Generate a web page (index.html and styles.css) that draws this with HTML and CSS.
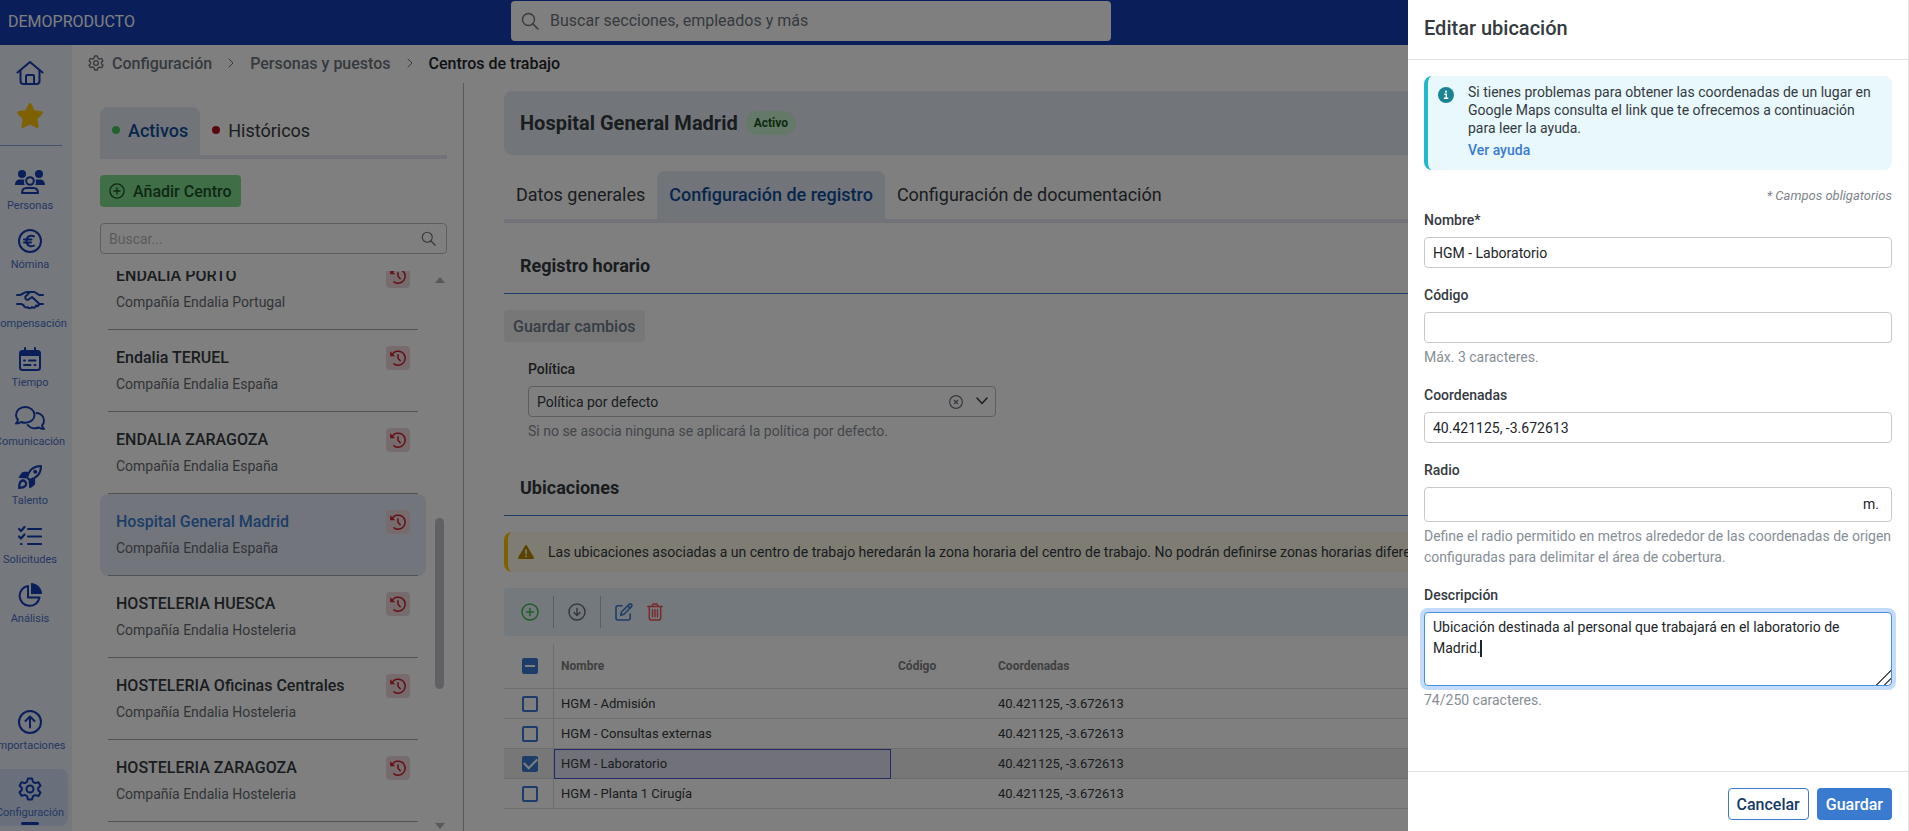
FILE: index.html
```html
<!DOCTYPE html>
<html lang="es">
<head>
  <meta charset="UTF-8">
  <meta name="viewport" content="width=device-width, initial-scale=1">
  <title>Centros de trabajo</title>
  <link rel="stylesheet" href="styles.css">
</head>
<body>
  <!-- Shared icons -->
  <svg class="sprite" aria-hidden="true">
    <symbol id="i-search" viewBox="0 0 18 18"><circle cx="7.500" cy="7.500" r="6" fill="none" stroke="currentColor" stroke-width="1.400"/><path d="M12 12l5 5" stroke="currentColor" stroke-width="1.600" stroke-linecap="round"/></symbol>
    <symbol id="i-gear" viewBox="0 0 24 24"><g fill="none" stroke="currentColor" stroke-width="2" stroke-linejoin="round"><circle cx="12" cy="12" r="3.500"/><path d="M10 1.500h4l1 3.300 2.200 1.300 3.300-.9 2 3.500-2.300 2.300v2.200l2.300 2.300-2 3.500-3.300-.9L15 19.200l-1 3.300h-4l-1-3.300-2.200-1.300-3.300.9-2-3.500L3.800 13v-2.200L1.500 8.700l2-3.500 3.300.9L9 4.800z"/></g></symbol>
    <symbol id="i-history" viewBox="0 0 16 16"><g fill="none" stroke="currentColor" stroke-width="1.500" stroke-linecap="round"><path d="M2.100 4.600A7 7 0 1 1 4 13.800"/><path d="M8 4.800V8.200l2.200 2.600"/></g><path d="M.2 1.200v5h5z" fill="currentColor"/></symbol>
    <symbol id="i-plus" viewBox="0 0 18 18"><circle cx="9" cy="9" r="8" fill="none" stroke="currentColor" stroke-width="1.500"/><path d="M9 5.500v7M5.500 9h7" stroke="currentColor" stroke-width="1.500" stroke-linecap="round"/></symbol>
    <symbol id="i-chevron" viewBox="0 0 6 10"><path d="M1 1l4 4-4 4" fill="none" stroke="currentColor" stroke-linecap="round"/></symbol>
  </svg>

  <header class="topbar">
    <span class="brand">DEMOPRODUCTO</span>
    <label class="global-search">
      <svg width="18" height="18"><use href="#i-search"/></svg>
      <input type="search" placeholder="Buscar secciones, empleados y más" aria-label="Buscar secciones, empleados y más">
    </label>
  </header>

  <div class="shell">
    <nav class="sidebar" aria-label="Principal">
      <div class="shortcuts">
        <a href="#" aria-label="Inicio"><svg width="28" height="24" viewBox="0 0 28 24"><g fill="none" stroke="currentColor" stroke-width="2" stroke-linecap="round" stroke-linejoin="round"><path d="M1.500 11.500L14 1l12.500 10.500"/><path d="M4.500 9.500V20a3 3 0 0 0 3 3h13a3 3 0 0 0 3-3V9.500"/><path d="M10 23v-8a1 1 0 0 1 1-1h6a1 1 0 0 1 1 1v8"/></g></svg></a>
        <a href="#" class="star" aria-label="Favoritos"><svg width="28" height="25" viewBox="24 0 528 512"><path fill="currentColor" d="M316.900 18C311.600 7 300.400 0 288.100 0s-23.400 7-28.800 18L195 150.300 51.400 171.500c-12 1.800-22 10.200-25.700 21.700s-.7 24.200 7.900 32.700L137.800 329 113.200 474.700c-2 12 3 24.200 12.900 31.300s23 8 33.800 2.300l128.300-68.500 128.300 68.500c10.800 5.700 23.900 4.900 33.800-2.300s14.900-19.300 12.900-31.300L438.500 329 542.700 225.900c8.600-8.500 11.700-21.200 7.900-32.700s-13.700-19.900-25.700-21.700L381.200 150.300 316.900 18z"/></svg></a>
      </div>

      <div class="nav-group">
        <a href="#" class="nav-item">
          <svg width="30" height="24" viewBox="0 0 30 24"><g fill="currentColor"><circle cx="7" cy="4" r="4"/><circle cx="24" cy="4" r="4"/><path d="M0 15c0-3.500 2-5.500 5-5.500h4.500c-.8 2-.6 3.800.3 5.500zM30 15c0-3.500-2-5.500-5-5.500h-4.500c.8 2 .6 3.800-.3 5.500z"/></g><g fill="none" stroke="currentColor" stroke-width="2"><circle cx="15" cy="11" r="3.800"/><path d="M7 23c0-3.500 2-5 4.500-5h7c2.500 0 4.500 1.500 4.500 5z" stroke-linejoin="round"/></g></svg>
          <span>Personas</span>
        </a>
        <a href="#" class="nav-item">
          <svg width="24" height="24" viewBox="0 0 24 24"><g fill="none" stroke="currentColor" stroke-width="2" stroke-linecap="round"><circle cx="12" cy="12" r="11"/><path d="M16 7.300c-3.800-1.700-7.500.5-7.500 4.700s3.700 6.400 7.500 4.700M6 10.500h7.500M6 13.500h7"/></g></svg>
          <span>Nómina</span>
        </a>
        <a href="#" class="nav-item">
          <svg width="28" height="24" viewBox="0 0 28 24"><g fill="none" stroke="currentColor" stroke-width="2" stroke-linecap="round" stroke-linejoin="round"><path d="M1 7h3c2.500-.5 4-3 7-3h3l-4.500 4.500c-1 2 1 4 3 3L16 9l6.500 6c1.500 2-1 4-2.500 2.500 0 2-2.500 3-4 1.500-1.500 2-3.500 1.500-4.500 0-1.500 1-3.500 0-4-2l-2.500-1H1"/><path d="M14 4h4c2 0 3 2.500 5.500 3H27M22.500 16H27"/></g></svg>
          <span>Compensación</span>
        </a>
        <a href="#" class="nav-item">
          <svg width="22" height="24" viewBox="0 0 22 24"><rect x="1" y="4" width="20" height="19" rx="2.500" fill="none" stroke="currentColor" stroke-width="2"/><path fill="currentColor" d="M1 4h20v5H1z"/><path d="M6 1v3M16 1v3M5 13.500h1M10 13.500h6.500M5 18h6.500M15.500 18h1" stroke="currentColor" stroke-width="2" stroke-linecap="round"/></svg>
          <span>Tiempo</span>
        </a>
        <a href="#" class="nav-item">
          <svg width="30" height="24" viewBox="0 0 30 24"><g fill="none" stroke="currentColor" stroke-width="1.900" stroke-linejoin="round" stroke-linecap="round"><path d="M10.300 1C5 1 1 4.400 1 9c0 2 .8 3.700 2 5-.3 1.500-1 2.500-2 3.500 2.200 0 4-.6 5.300-1.500 1.200.5 2.600.8 4 .8 5.200 0 9.200-3.400 9.200-7.800S15.500 1 10.300 1z"/><path d="M21.500 7c4.500.3 7.500 3.500 7.500 7.500 0 2-.8 3.800-2 5 .3 1.500 1 2.500 2 3.500-2.200 0-4-.6-5.300-1.500-4 1.500-8.500.5-11-2.500"/></g></svg>
          <span>Comunicación</span>
        </a>
        <a href="#" class="nav-item">
          <svg width="24" height="24" viewBox="0 0 24 24"><path d="M9 12.500C11 5 15.500 1 23 1c0 7.500-4 12-11.500 14z" fill="none" stroke="currentColor" stroke-width="2" stroke-linejoin="round"/><circle cx="17.200" cy="6.800" r="2" fill="currentColor"/><path fill="currentColor" d="M10.500 7L8 13.500l-7.500-.8c0-.6 3-5 4-5.500C5.500 6.700 8 6.800 10.500 7zM17 13.500l-6.500 2.500.8 7.500c.6 0 5-3 5.500-4 .5-1 .4-3.500.2-6z"/><path d="M1.200 22.800c0-3 .3-5 1.500-6.200 1.200-1.200 3.200-1.200 4.500 0s1.200 3.300 0 4.500c-1.200 1.200-3 1.700-6 1.700z" fill="none" stroke="currentColor" stroke-width="2.200"/></svg>
          <span>Talento</span>
        </a>
        <a href="#" class="nav-item">
          <svg width="24" height="24" viewBox="0 0 24 24"><path d="M1 5l2 2 3.500-4M1 12.500l2 2 3.500-4M10 5h13M10 12.500h13M10 20h13M3 20h.5" fill="none" stroke="currentColor" stroke-width="2.200" stroke-linecap="round" stroke-linejoin="round"/></svg>
          <span>Solicitudes</span>
        </a>
        <a href="#" class="nav-item">
          <svg width="24" height="24" viewBox="0 0 24 24"><path d="M13 0c6 0 11 5 11 11H13z" fill="currentColor"/><path d="M10 3a10 10 0 1 0 11.500 11.500H10z" fill="none" stroke="currentColor" stroke-width="2" stroke-linejoin="round"/></svg>
          <span>Análisis</span>
        </a>
      </div>

      <div class="nav-group nav-bottom">
        <a href="#" class="nav-item">
          <svg width="24" height="24" viewBox="0 0 24 24"><g fill="none" stroke="currentColor" stroke-width="2" stroke-linecap="round" stroke-linejoin="round"><circle cx="12" cy="12" r="11"/><path d="M12 17.500v-11M7.500 11L12 6.500l4.500 4.500"/></g></svg>
          <span>Importaciones</span>
        </a>
        <a href="#" class="nav-item current">
          <svg width="24" height="24"><use href="#i-gear"/></svg>
          <span>Configuración</span>
        </a>
      </div>
    </nav>

    <main class="main">
      <nav class="breadcrumb" aria-label="Ruta">
        <svg width="16" height="16"><use href="#i-gear"/></svg>
        <a href="#">Configuración</a>
        <svg width="6" height="10"><use href="#i-chevron"/></svg>
        <a href="#">Personas y puestos</a>
        <svg width="6" height="10"><use href="#i-chevron"/></svg>
        <span class="here">Centros de trabajo</span>
      </nav>

      <div class="split">
        <section class="centers">
          <div class="tabs">
            <button type="button" class="tab active"><i class="dot green"></i>Activos</button>
            <button type="button" class="tab"><i class="dot red"></i>Históricos</button>
          </div>
          <button type="button" class="btn btn-add"><svg width="16" height="16"><use href="#i-plus"/></svg>Añadir Centro</button>
          <label class="list-search">
            <input type="search" placeholder="Buscar..." aria-label="Buscar centro">
            <svg width="15" height="15"><use href="#i-search"/></svg>
          </label>

          <div class="list-wrap">
            <ul class="list">
              <li class="center"><div class="center-in"><div><h3>ENDALIA PORTO</h3><p>Compañía Endalia Portugal</p></div><button type="button" class="history" aria-label="Histórico"><svg width="16" height="16"><use href="#i-history"/></svg></button></div></li>
              <li class="center"><div class="center-in"><div><h3>Endalia TERUEL</h3><p>Compañía Endalia España</p></div><button type="button" class="history" aria-label="Histórico"><svg width="16" height="16"><use href="#i-history"/></svg></button></div></li>
              <li class="center"><div class="center-in"><div><h3>ENDALIA ZARAGOZA</h3><p>Compañía Endalia España</p></div><button type="button" class="history" aria-label="Histórico"><svg width="16" height="16"><use href="#i-history"/></svg></button></div></li>
              <li class="center selected"><div class="center-in"><div><h3>Hospital General Madrid</h3><p>Compañía Endalia España</p></div><button type="button" class="history" aria-label="Histórico"><svg width="16" height="16"><use href="#i-history"/></svg></button></div></li>
              <li class="center"><div class="center-in"><div><h3>HOSTELERIA HUESCA</h3><p>Compañía Endalia Hosteleria</p></div><button type="button" class="history" aria-label="Histórico"><svg width="16" height="16"><use href="#i-history"/></svg></button></div></li>
              <li class="center"><div class="center-in"><div><h3>HOSTELERIA Oficinas Centrales</h3><p>Compañía Endalia Hosteleria</p></div><button type="button" class="history" aria-label="Histórico"><svg width="16" height="16"><use href="#i-history"/></svg></button></div></li>
              <li class="center"><div class="center-in"><div><h3>HOSTELERIA ZARAGOZA</h3><p>Compañía Endalia Hosteleria</p></div><button type="button" class="history" aria-label="Histórico"><svg width="16" height="16"><use href="#i-history"/></svg></button></div></li>
            </ul>
            <div class="scrollbar" aria-hidden="true">
              <svg width="10" height="6"><path d="M0 6l5-6 5 6z"/></svg>
              <div class="track"><div class="thumb"></div></div>
              <svg width="10" height="6"><path d="M0 0l5 6 5-6z"/></svg>
            </div>
          </div>
        </section>

        <section class="detail">
          <div class="detail-head">
            <h1>Hospital General Madrid</h1>
            <span class="badge">Activo</span>
          </div>
          <div class="tabs">
            <button type="button" class="tab">Datos generales</button>
            <button type="button" class="tab active">Configuración de registro</button>
            <button type="button" class="tab">Configuración de documentación</button>
          </div>

          <h2 class="section-title">Registro horario</h2>
          <button type="button" class="btn btn-disabled" disabled>Guardar cambios</button>
          <div class="field policy">
            <label for="politica">Política</label>
            <div class="select-wrap">
              <select id="politica"><option>Política por defecto</option></select>
              <button type="button" class="clear" aria-label="Quitar"><svg width="14" height="14" viewBox="0 0 14 14"><circle cx="7" cy="7" r="6.300" fill="none" stroke="currentColor" stroke-width="1.200"/><path d="M5 5l4 4M9 5l-4 4" stroke="currentColor" stroke-width="1.300"/></svg></button>
              <svg class="arrow" width="12" height="8" viewBox="0 0 12 8"><path d="M1 1l5 5.500L11 1" fill="none" stroke="currentColor" stroke-width="1.500" stroke-linecap="round"/></svg>
            </div>
            <p class="hint">Si no se asocia ninguna se aplicará la política por defecto.</p>
          </div>

          <h2 class="section-title">Ubicaciones</h2>
          <div class="alert warning">
            <svg width="16" height="14" viewBox="0 0 16 14"><path d="M8 1l7 12H1z" fill="currentColor" stroke="currentColor" stroke-width="2" stroke-linejoin="round"/><path d="M8 4.800v4M8 11v.4" stroke="#fff8e6" stroke-width="1.600" stroke-linecap="round"/></svg>
            <p>Las ubicaciones asociadas a un centro de trabajo heredarán la zona horaria del centro de trabajo. No podrán definirse zonas horarias diferentes.</p>
          </div>

          <div class="toolbar">
            <button type="button" class="tool add" aria-label="Añadir"><svg width="18" height="18"><use href="#i-plus"/></svg></button>
            <span class="sep"></span>
            <button type="button" class="tool" aria-label="Descargar"><svg width="18" height="18" viewBox="0 0 18 18"><g fill="none" stroke="currentColor" stroke-width="1.500" stroke-linecap="round" stroke-linejoin="round"><circle cx="9" cy="9" r="8"/><path d="M9 5.300v7M6 9.500l3 3 3-3"/></g></svg></button>
            <span class="sep"></span>
            <button type="button" class="tool edit" aria-label="Editar"><svg width="18" height="18" viewBox="0 0 18 18"><g fill="none" stroke="currentColor" stroke-width="1.600" stroke-linecap="round" stroke-linejoin="round"><path d="M7 2.800H3a2 2 0 0 0-2 2V15a2 2 0 0 0 2 2h10.200a2 2 0 0 0 2-2v-4"/><path d="M5.800 12.200l.8-3.400 7.600-7.400c.7-.6 1.600-.6 2.200 0s.6 1.500 0 2.200l-7.400 7.600zM13 3l2.200 2.200"/></g></svg></button>
            <button type="button" class="tool delete" aria-label="Eliminar"><svg width="16" height="18" viewBox="0 0 16 18"><path d="M.8 3.500h14.400M5 3.300l1-2.300h4l1 2.300M2.300 3.500V15a2 2 0 0 0 2 2h7.400a2 2 0 0 0 2-2V3.500M5.500 6.800v7M8 6.800v7M10.500 6.800v7" fill="none" stroke="currentColor" stroke-width="1.400" stroke-linecap="round" stroke-linejoin="round"/></svg></button>
          </div>

          <table class="grid">
            <thead>
              <tr>
                <th class="pick"><input type="checkbox" class="check partial" aria-label="Seleccionar todo"></th>
                <th class="name">Nombre</th>
                <th class="code">Código</th>
                <th>Coordenadas</th>
              </tr>
            </thead>
            <tbody>
              <tr><td class="pick"><input type="checkbox" class="check" aria-label="HGM - Admisión"></td><td>HGM - Admisión</td><td></td><td>40.421125, -3.672613</td></tr>
              <tr><td class="pick"><input type="checkbox" class="check" aria-label="HGM - Consultas externas"></td><td>HGM - Consultas externas</td><td></td><td>40.421125, -3.672613</td></tr>
              <tr class="selected"><td class="pick"><input type="checkbox" class="check" aria-label="HGM - Laboratorio" checked></td><td class="focused">HGM - Laboratorio</td><td></td><td>40.421125, -3.672613</td></tr>
              <tr><td class="pick"><input type="checkbox" class="check" aria-label="HGM - Planta 1 Cirugía"></td><td>HGM - Planta 1 Cirugía</td><td></td><td>40.421125, -3.672613</td></tr>
            </tbody>
          </table>
        </section>
      </div>
    </main>
  </div>

  <div class="backdrop"></div>

  <form class="drawer" role="dialog" aria-labelledby="drawer-title">
    <header class="drawer-head"><h2 id="drawer-title">Editar ubicación</h2></header>
    <div class="drawer-body">
      <div class="alert info">
        <svg width="16" height="16" viewBox="0 0 16 16"><circle cx="8" cy="8" r="8" fill="currentColor"/><path d="M6.300 7.300h2v4M5.900 11.300h4.400" fill="none" stroke="#fff" stroke-width="1.500"/><circle cx="8" cy="4.700" r="1.100" fill="#fff"/></svg>
        <div>
          <p>Si tienes problemas para obtener las coordenadas de un lugar en Google Maps consulta el link que te ofrecemos a continuación para leer la ayuda.</p>
          <a href="#">Ver ayuda</a>
        </div>
      </div>
      <p class="required">* Campos obligatorios</p>

      <div class="field">
        <label for="nombre">Nombre*</label>
        <input type="text" id="nombre" class="control" value="HGM - Laboratorio" required>
      </div>
      <div class="field">
        <label for="codigo">Código</label>
        <input type="text" id="codigo" class="control" maxlength="3">
        <p class="hint">Máx. 3 caracteres.</p>
      </div>
      <div class="field">
        <label for="coordenadas">Coordenadas</label>
        <input type="text" id="coordenadas" class="control" value="40.421125, -3.672613">
      </div>
      <div class="field">
        <label for="radio">Radio</label>
        <div class="control with-unit">
          <input type="text" id="radio">
          <span>m.</span>
        </div>
        <p class="hint">Define el radio permitido en metros alrededor de las coordenadas de origen configuradas para delimitar el área de cobertura.</p>
      </div>
      <div class="field">
        <label for="descripcion">Descripción</label>
        <div class="textarea-wrap">
          <textarea id="descripcion" class="control" maxlength="250">Ubicación destinada al personal que trabajará en el laboratorio de Madrid.</textarea>
          <span class="text-cursor"></span>
        </div>
        <p class="hint">74/250 caracteres.</p>
      </div>
    </div>
    <footer class="drawer-foot">
      <button type="button" class="btn btn-outline">Cancelar</button>
      <button type="submit" class="btn btn-primary">Guardar</button>
    </footer>
  </form>
</body>
</html>
```

FILE: styles.css
```css
* {
  box-sizing: border-box;
}
body {
  margin: 0;
  height: 100vh;
  display: flex;
  flex-direction: column;
  overflow: hidden;
  font-family: Roboto, sans-serif;
  font-size: 14px;
  line-height: 21px;
  color: #343a40;
  background: #fff;
}
h1, h2, h3, p, ul {
  margin: 0;
  padding: 0;
}
a {
  text-decoration: none;
}
button, input, select, textarea {
  font-family: inherit;
  font-size: inherit;
  color: inherit;
}
button {
  background: none;
  border: none;
  padding: 0;
  cursor: pointer;
}
svg {
  display: block;
  flex-shrink: 0;
}
.sprite {
  position: absolute;
  width: 0;
  height: 0;
}

/* Top bar */
.topbar {
  display: flex;
  align-items: flex-start;
  height: 45px;
  flex-shrink: 0;
  background: #143cb4;
}
.brand {
  flex: 0 0 511px;
  padding-left: 8px;
  font-size: 16px;
  line-height: 43px;
  color: #fff;
}
.global-search {
  display: flex;
  align-items: center;
  gap: 11px;
  width: 600px;
  height: 40px;
  margin-top: 1px;
  padding: 0 10px 1px;
  background: #fff;
  border-radius: 4px;
  color: #6c757d;
}
.global-search input, .list-search input {
  flex: 1;
  min-width: 0;
  border: none;
  outline: none;
  padding: 0;
  background: none;
}
.global-search input {
  font-size: 16px;
}
.global-search input::placeholder {
  color: #6c757d;
}

/* Sidebar */
.shell {
  flex: 1;
  display: flex;
  min-height: 0;
}
.sidebar {
  display: flex;
  flex-direction: column;
  width: 72px;
  flex-shrink: 0;
  overflow: hidden;
  padding-bottom: 5px;
  background: #eaf1fb;
  color: #143cb4;
}
.sidebar a {
  color: #143cb4;
}
.shortcuts {
  display: flex;
  flex-direction: column;
  align-items: center;
  gap: 18px;
  width: 64px;
  margin-left: -2px;
  padding: 16px 0 17px;
  border-bottom: 1px solid #8ba4dc;
}
.sidebar .star {
  color: #ffc400;
}
.nav-group {
  display: flex;
  flex-direction: column;
  gap: 2px;
  width: 76px;
  margin: 16px 0 0 -8px;
}
.nav-bottom {
  margin-top: auto;
  gap: 10px;
}
.nav-item {
  display: flex;
  flex-direction: column;
  align-items: center;
  gap: 3px;
  height: 57px;
  padding-top: 8px;
  border-radius: 8px;
}
.nav-item span {
  font-size: 11px;
  line-height: 18px;
  color: #4a6fc4;
}
.nav-item.current {
  background: #d3e0f8;
}
.nav-item.current::after {
  content: "";
  width: 18px;
  height: 3px;
  margin-top: -3px;
  border-radius: 2px;
  background: #143cb4;
}

/* Main area */
.main {
  flex: 1;
  display: flex;
  flex-direction: column;
  min-width: 0;
}
.breadcrumb {
  display: flex;
  align-items: center;
  gap: 16px;
  height: 38px;
  padding: 0 0 2px 16px;
  font-size: 16px;
  font-weight: 500;
  color: #6c757d;
}
.breadcrumb a {
  color: #6c757d;
}
.breadcrumb svg:first-child {
  margin-right: -8px;
}
.breadcrumb .here {
  color: #212529;
}
.split {
  flex: 1;
  display: flex;
  min-height: 0;
}
.centers {
  display: flex;
  flex-direction: column;
  align-items: stretch;
  width: 392px;
  flex-shrink: 0;
  padding: 24px 16px 0 28px;
  border-right: 1px solid #b5b5b8;
}
.tabs {
  display: flex;
  flex-shrink: 0;
  border-bottom: 4px solid #e4e6f2;
}
.tab {
  display: flex;
  align-items: center;
  gap: 8px;
  height: 48px;
  padding: 0 12px 2px;
  border-radius: 8px 8px 0 0;
  font-size: 18px;
  white-space: nowrap;
}
.tab.active {
  background: #e3e9f2;
  font-weight: 500;
  color: #0f4c99;
}
.dot {
  width: 8px;
  height: 8px;
  border-radius: 50%;
}
.dot.green {
  background: #46c45c;
}
.dot.red {
  background: #b3131c;
}
.btn {
  display: flex;
  align-items: center;
  gap: 8px;
  height: 32px;
  padding: 0 9px;
  border-radius: 4px;
  font-size: 16px;
  font-weight: 500;
}
.btn-add {
  align-self: flex-start;
  flex-shrink: 0;
  margin: 16px 0;
  background: #80dc8f;
  color: #1c5226;
}
.list-search {
  display: flex;
  align-items: center;
  height: 31px;
  flex-shrink: 0;
  padding: 0 10px 0 8px;
  border: 1px solid #b9bcbe;
  border-radius: 4px;
  color: #6c757d;
}
.list-search input::placeholder {
  color: #b4b7ba;
}
.list-wrap {
  flex: 1;
  display: flex;
  gap: 9px;
  min-height: 0;
  margin-top: 17px;
  padding-right: 3px;
  overflow: hidden;
}
.list {
  flex: 1;
  list-style: none;
  margin-top: -23px;
}
.center {
  padding: 0 8px;
}
.center-in {
  display: flex;
  justify-content: space-between;
  align-items: flex-start;
  height: 82px;
  padding: 16px 8px 0;
  border-bottom: 1px solid #a5a5a8;
}
.center h3 {
  font-size: 16px;
  line-height: 24px;
  font-weight: 500;
}
.center p {
  margin-top: 4px;
  color: #646a70;
}
.center.selected {
  background: #e4ecf8;
  border-radius: 8px;
}
.center.selected h3 {
  color: #3a7bd0;
}
.history {
  padding: 4px;
  border-radius: 4px;
  background: #ecd8da;
  color: #c8202c;
}
.scrollbar {
  display: flex;
  flex-direction: column;
  align-items: center;
  width: 9px;
  padding: 6px 0 2px;
  fill: #b0b2b5;
}
.track {
  flex: 1;
  display: flex;
  flex-direction: column;
  justify-content: flex-end;
  padding-bottom: 134px;
}
.thumb {
  width: 9px;
  height: 42%;
  border-radius: 5px;
  background: #c0c2c5;
}

/* Detail */
.detail {
  flex: 1;
  min-width: 0;
  padding: 8px 24px 0 40px;
}
.detail-head {
  display: flex;
  align-items: center;
  gap: 8px;
  height: 64px;
  margin-bottom: 16px;
  padding: 0 16px;
  border-radius: 8px;
  background: #e5ebf3;
}
.detail-head h1 {
  font-size: 20px;
  font-weight: 700;
}
.badge {
  padding: 0 8px;
  border-radius: 12px;
  font-size: 12px;
  line-height: 24px;
  font-weight: 700;
  background: #c8f2cf;
  color: #1c5226;
}
.section-title {
  height: 71px;
  margin-bottom: 16px;
  padding: 32px 16px 0;
  border-bottom: 1px solid #3a7bd0;
  font-size: 18px;
  font-weight: 700;
}
.btn-disabled {
  background: #efefef;
  color: #6c7a8c;
}
.select-wrap, .textarea-wrap {
  position: relative;
}
.select-wrap select {
  display: block;
  width: 100%;
  height: 31px;
  padding: 0 60px 0 8px;
  border: 1px solid #b9bcbe;
  border-radius: 4px;
  background: none;
  appearance: none;
}
.clear, .arrow {
  position: absolute;
  top: 9px;
  right: 33px;
  color: #6c757d;
}
.arrow {
  top: 11px;
  right: 8px;
  color: #343a40;
  pointer-events: none;
}
.alert {
  display: flex;
  border-left: 4px solid;
  border-radius: 8px;
}
.alert.warning {
  align-items: center;
  gap: 14px;
  height: 40px;
  padding: 0 10px;
  border-color: #ffc400;
  background: #fff8e6;
  overflow: hidden;
  white-space: nowrap;
}
.alert.warning svg {
  color: #b38a00;
}
.toolbar {
  display: flex;
  align-items: center;
  gap: 14px;
  height: 48px;
  margin: 16px 0 8px;
  padding: 0 17px;
  border-radius: 4px;
  background: #e9f2fa;
}
.tool {
  color: #6c757d;
}
.tool.add {
  color: #3cbe50;
}
.tool.edit {
  color: #3a7bd0;
}
.tool.delete {
  color: #f05050;
}
.sep {
  width: 1px;
  height: 32px;
  background: #b9bcbe;
}

/* Locations table */
.grid {
  width: 100%;
  table-layout: fixed;
  border-spacing: 0;
  font-size: 13px;
  line-height: 18px;
}
.grid th, .grid td {
  height: 30px;
  padding: 0 7px;
  border-bottom: 1px solid #dcdcdc;
  text-align: left;
}
.grid th {
  height: 45px;
  font-size: 12px;
  font-weight: 700;
  color: #808080;
}
.grid .pick {
  width: 50px;
  padding: 0 0 0 18px;
  border-right: 1px solid #dcdcdc;
}
.grid .name {
  width: 337px;
}
.grid .code {
  width: 100px;
}
.grid .selected td {
  background: #efefef;
}
.grid .selected .focused {
  background: #e3e5f2;
  outline: 1px solid #4254c8;
  outline-offset: -1px;
}
.check {
  display: grid;
  place-content: center;
  width: 16px;
  height: 16px;
  margin: 0;
  border: 2px solid #3a7bd0;
  border-radius: 2px;
  appearance: none;
}
.check:checked, .check.partial {
  background: #3a7bd0;
}
.check:checked::after {
  content: "";
  width: 11px;
  height: 6px;
  margin-top: -3px;
  border: solid #fff;
  border-width: 0 0 2px 2px;
  transform: rotate(-45deg);
}
.check.partial::after {
  content: "";
  width: 10px;
  height: 2px;
  background: #fff;
}

.backdrop {
  position: fixed;
  inset: 0;
  background: rgba(0, 0, 0, 0.5);
}

/* Drawer */
.drawer {
  position: fixed;
  top: 0;
  right: 0;
  bottom: 0;
  display: flex;
  flex-direction: column;
  width: 501px;
  background: #fff;
  border-right: 1px solid #e4e4e4;
}
.drawer-head {
  padding: 15px 16px 17px;
  border-bottom: 1px solid #dee2e6;
}
.drawer-head h2 {
  font-size: 20px;
  line-height: 27px;
  font-weight: 500;
}
.drawer-body {
  flex: 1;
  min-height: 0;
  overflow: hidden;
  padding: 16px;
}
.alert.info {
  gap: 14px;
  padding: 7px 16px 9px 10px;
  border-color: #20b8cd;
  background: #e8f8fc;
  line-height: 18px;
}
.alert.info svg {
  margin-top: 4px;
  color: #1b8494;
}
.alert.info a {
  display: block;
  margin: 4px 0 2px;
  font-weight: 500;
  color: #3a7bd0;
}
.required {
  margin: 15px 0 3px;
  text-align: right;
  font-size: 13px;
  font-style: italic;
  color: #7d848a;
}
.field {
  margin-bottom: 16px;
}
.field label {
  display: block;
  margin-bottom: 6px;
  line-height: 22px;
  font-weight: 500;
}
.field.policy {
  width: 468px;
  margin: 16px 0 3px 24px;
}
.control {
  display: block;
  width: 100%;
  height: 31px;
  padding: 0 8px;
  border: 1px solid #c6cacd;
  border-radius: 4px;
  background: #fff;
  color: #212529;
}
.hint {
  margin-top: 4px;
  color: #868e96;
}
.with-unit {
  display: flex;
  align-items: center;
  height: 35px;
  padding-right: 12px;
}
.with-unit input {
  flex: 1;
  min-width: 0;
  border: none;
  outline: none;
  padding: 0;
}
textarea.control {
  height: 74px;
  padding: 4px 8px;
  line-height: 21px;
  border-color: #4a90d9;
  outline: none;
  box-shadow: 0 0 0 4px #c2dbfe;
  resize: vertical;
  caret-color: transparent;
}
textarea.control::-webkit-resizer {
  background: linear-gradient(135deg, transparent 49%, #555 49%, #555 56%, transparent 56%, transparent 74%, #555 74%, #555 81%, transparent 81%);
}
.text-cursor {
  position: absolute;
  top: 28px;
  left: 56px;
  width: 2px;
  height: 17px;
  background: #212529;
}
.drawer-foot {
  display: flex;
  justify-content: flex-end;
  gap: 8px;
  padding: 16px 16px 11px;
  border-top: 1px solid #dee2e6;
}
.btn-outline {
  border: 1px solid #3a7bd0;
  padding: 0 8px;
  color: #163a66;
}
.btn-primary {
  background: #3a7bd0;
  color: #fff;
}
```
